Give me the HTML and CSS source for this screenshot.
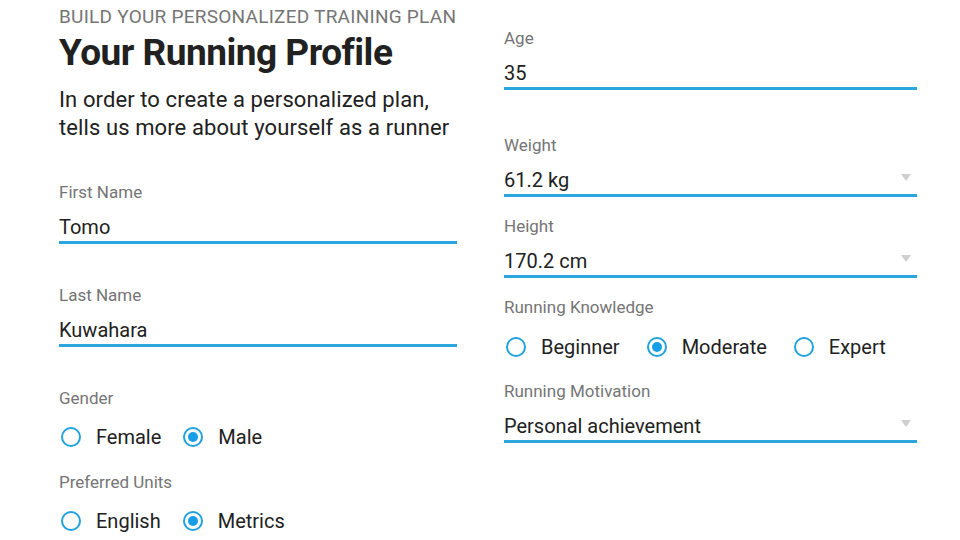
FILE: index.html
```html
<!DOCTYPE html>
<html lang="en">
<head>
    <meta charset="UTF-8">
    <meta name="viewport" content="width=device-width, initial-scale=1.0">
    <title>Your Running Profile</title>
    <link rel="stylesheet" href="styles.css">
</head>
<body>
    <main class="profile">
        <section class="column">
            <header class="intro">
                <p class="eyebrow">Build your personalized training plan</p>
                <h1>Your Running Profile</h1>
                <p class="lead">In order to create a personalized plan,<br>tells us more about yourself as a runner</p>
            </header>

            <div class="field field-text">
                <label>First Name</label>
                <div class="input">Tomo</div>
            </div>

            <div class="field field-text">
                <label>Last Name</label>
                <div class="input">Kuwahara</div>
            </div>

            <div class="field field-choice">
                <label>Gender</label>
                <div class="radios">
                    <span class="radio"><span class="dot"></span>Female</span>
                    <span class="radio checked"><span class="dot"></span>Male</span>
                </div>
            </div>

            <div class="field field-choice">
                <label>Preferred Units</label>
                <div class="radios">
                    <span class="radio"><span class="dot"></span>English</span>
                    <span class="radio checked"><span class="dot"></span>Metrics</span>
                </div>
            </div>
        </section>

        <section class="column column-right">
            <div class="field field-text">
                <label>Age</label>
                <div class="input">35</div>
            </div>

            <div class="field field-select">
                <label>Weight</label>
                <div class="input select">61.2 kg<span class="arrow"></span></div>
            </div>

            <div class="field field-select">
                <label>Height</label>
                <div class="input select">170.2 cm<span class="arrow"></span></div>
            </div>

            <div class="field field-choice">
                <label>Running Knowledge</label>
                <div class="radios">
                    <span class="radio"><span class="dot"></span>Beginner</span>
                    <span class="radio checked"><span class="dot"></span>Moderate</span>
                    <span class="radio"><span class="dot"></span>Expert</span>
                </div>
            </div>

            <div class="field field-select">
                <label>Running Motivation</label>
                <div class="input select">Personal achievement<span class="arrow"></span></div>
            </div>
        </section>
    </main>
</body>
</html>
```

FILE: styles.css
```css
body {
    font-family: Roboto, "Noto Sans", Arial, sans-serif;
    margin: 0;
    padding: 0;
    background-color: #fff;
    color: #212121;
}

.profile {
    display: grid;
    grid-template-columns: 398px 413px;
    column-gap: 47px;
    padding-left: 59px;
}

.column {
    display: flex;
    flex-direction: column;
}

.intro {
    padding-top: 5px;
    margin-bottom: 40px;
}

.eyebrow {
    margin: 0;
    font-size: 19px;
    line-height: 24px;
    letter-spacing: 0.25px;
    text-transform: uppercase;
    color: #757575;
}

h1 {
    margin: 2px 0 0;
    font-size: 37px;
    line-height: 44px;
    font-weight: 700;
    letter-spacing: -0.5px;
    color: #212121;
}

.lead {
    margin: 11px 0 0;
    font-size: 22px;
    line-height: 28px;
    letter-spacing: 0.1px;
    color: #212121;
}

.field label {
    display: block;
    font-size: 17px;
    line-height: 20px;
    color: #757575;
    margin-bottom: 12px;
}

.input {
    font-size: 20px;
    line-height: 26px;
    padding-bottom: 1px;
    border-bottom: 3px solid #29a6dd;
}

.select {
    display: flex;
    justify-content: space-between;
    align-items: center;
}

.arrow {
    width: 0;
    height: 0;
    margin-right: 6px;
    margin-top: -6px;
    border-left: 5px solid transparent;
    border-right: 5px solid transparent;
    border-top: 7px solid #cfcfcf;
}

.field-text {
    margin-bottom: 41px;
}

.column-right .field-text {
    margin-bottom: 45px;
}

.column-right {
    padding-top: 28px;
}

.field-select {
    margin-bottom: 19px;
}

.field-choice {
    margin-bottom: 21px;
}

.field-choice label {
    margin-bottom: 15px;
}

.column-right .field-choice {
    margin-bottom: 20px;
}

.column-right .field-choice label {
    margin-bottom: 16px;
}

.radios {
    display: flex;
    gap: 20px;
}

.column-right .radios {
    gap: 25px;
}

.radio {
    display: flex;
    align-items: center;
    font-size: 20px;
    line-height: 28px;
    color: #212121;
}

.dot {
    box-sizing: border-box;
    width: 20px;
    height: 20px;
    margin-left: 2px;
    margin-right: 15px;
    border: 2px solid #22a2dc;
    border-radius: 50%;
    display: flex;
    align-items: center;
    justify-content: center;
}

.radio.checked .dot::after {
    content: "";
    width: 10px;
    height: 10px;
    border-radius: 50%;
    background-color: #169ee8;
}
```
